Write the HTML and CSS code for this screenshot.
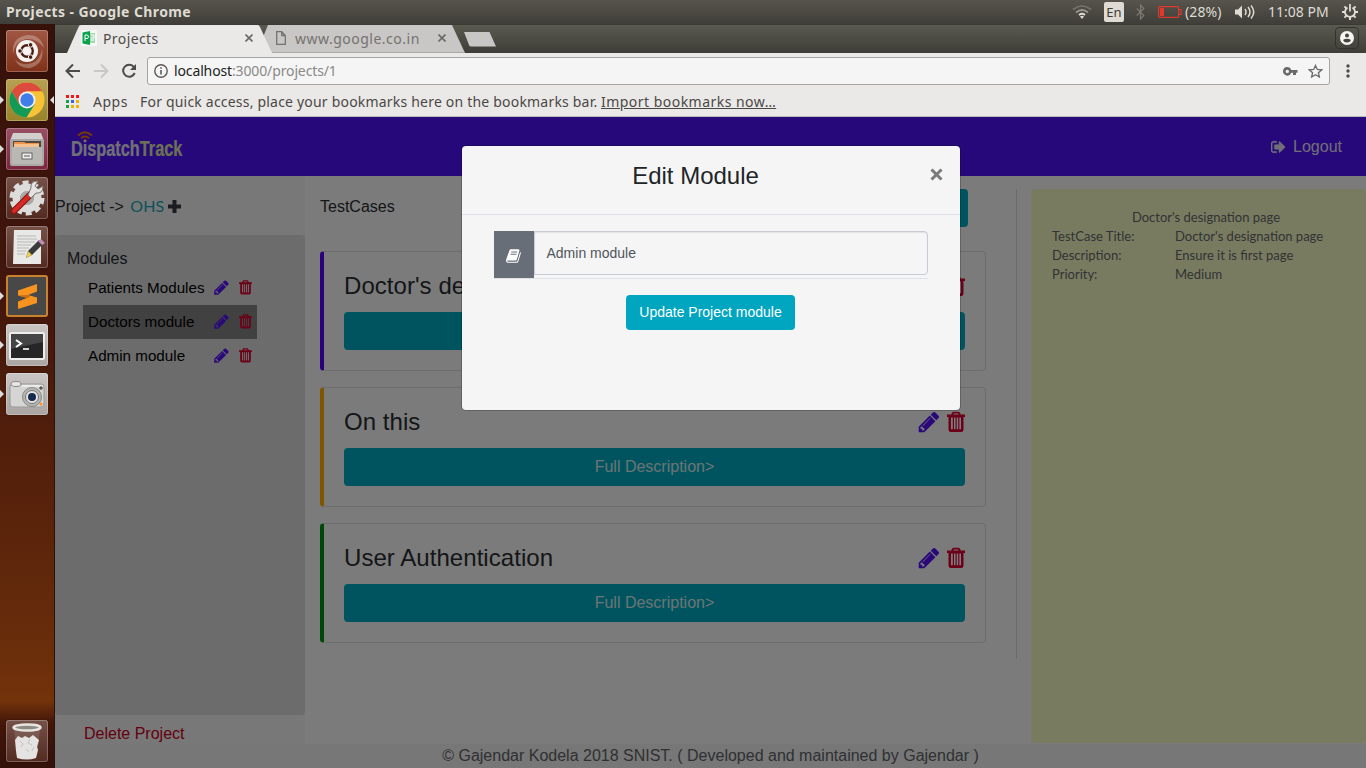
FILE: index.html
```html
<!DOCTYPE html>
<html lang="en">
<head>
<meta charset="utf-8">
<title>Projects</title>
<link rel="stylesheet" href="styles.css">
</head>
<body>
<svg class="defs" aria-hidden="true">
  <symbol id="pencil" viewBox="0 0 1792 1792"><path d="M491 1536l91-91-235-235-91 91v107h128v128h107zm523-928q0-22-22-22-10 0-17 7l-542 542q-7 7-7 17 0 22 22 22 10 0 17-7l542-542q7-7 7-17zm-54-192l416 416-832 832h-416v-416zm683 96q0 53-37 90l-166 166-416-416 166-165q36-38 90-38 53 0 91 38l235 234q37 39 37 91z"/></symbol>
  <symbol id="trash" viewBox="0 0 24 24"><path fill-rule="evenodd" d="M9.500 1.800h5q1 0 1.400.9l.9 1.800H21V7h-1.500v12.500q0 2.500-2.300 2.500H6.800q-2.300 0-2.300-2.500V7H3V4.500h4.200l.9-1.800q.4-.9 1.400-.9zM9.300 4.500h5.400l-.6-1H9.900zM7 7.500v11.700h1.800V7.500zM10 7.500v11.700h1.500V7.500zM12.700 7.500v11.700h1.500V7.500zM15.400 7.500v11.700H17V7.500z"/></symbol>
</svg>
<div class="screen">
  <header class="topbar">
    <span class="window-title">Projects - Google Chrome</span>
    <div class="indicators">
      <svg class="i-wifi" width="20" height="16" viewBox="0 0 20 16" fill="none" stroke-width="1.700"><path d="M1 5.500Q10-1.500 19 5.500" stroke="#77756e"/><path d="M4 8.500Q10 3.500 16 8.500" stroke="#99978f"/><path d="M7 11Q10 8.500 13 11" stroke="#dfdbd2"/><path d="M8 12.500l2 2.500 2-2.500q-2-1.500-4 0z" fill="#dfdbd2" stroke="none"/></svg>
      <span class="lang">En</span>
      <svg class="i-bt" width="9" height="16" viewBox="0 0 9 16" fill="none" stroke="#7c7a73" stroke-width="1.200"><path d="M.8 4.500l7 7L4.500 15V1l3.300 3.500-7 7"/></svg>
      <svg class="i-bat" width="24" height="12" viewBox="0 0 24 12" fill="none" stroke="#df382c" stroke-width="1.200"><rect x=".6" y=".6" width="20" height="10.800" rx="1"/><path d="M21 3.500h2v5h-2"/><path d="M2 2h4v8H2z" fill="#df382c" stroke="none"/></svg>
      <span class="pct">(28%)</span>
      <svg class="i-vol" width="21" height="16" viewBox="0 0 21 16" fill="none" stroke="#dfdbd2" stroke-width="1.500"><path d="M0 5.500h3L7 1.500v13l-4-4H0z" fill="#dfdbd2" stroke="none"/><path d="M10 5q2 3 0 6M13 3q4 5 0 10M16 1.500q5.500 6.500 0 13"/></svg>
      <span class="clock">11:08 PM</span>
      <svg class="i-gear" width="16" height="16" viewBox="0 0 16 16" fill="none" stroke="#dfdbd2"><path d="M5.500 3.600a5 5 0 1 0 5 0" stroke-width="1.800"/><path d="M8 0v7.500" stroke-width="1.800"/><path d="M2.400 2.400l2 2M13.600 2.400l-2 2M0 8h3M13 8h3M2.400 13.600l2-2M13.600 13.600l-2-2M8 13v3" stroke-width="2"/></svg>
    </div>
  </header>
  <div class="desktop">
    <nav class="launcher">
      <div class="tile t-ubuntu"><svg viewBox="0 0 42 42"><path d="M7 24Q5 7 22 5Q35 5 38 18Q31 8 20 9Q9 11 7 24M36 17Q39 34 24 38Q14 39 9 30Q20 38 30 31Q36 25 36 17" fill="#fff" opacity=".28"/><circle cx="21" cy="21" r="11" fill="#f6f3f1"/><circle cx="21" cy="21" r="5.800" fill="none" stroke="#4a1e14" stroke-width="2.400"/><g fill="#4a1e14" stroke="#f6f3f1" stroke-width="1"><circle cx="14" cy="21" r="2.300"/><circle cx="24.600" cy="14.900" r="2.300"/><circle cx="24.600" cy="27.100" r="2.300"/></g></svg></div>
      <div class="tile t-chrome run"><svg viewBox="0 0 42 42"><circle cx="21" cy="21" r="17.500" fill="#f7c235"/><path d="M5.800 12.300A17.500 17.500 0 0 1 36.200 12.300H21L13.400 25.400z" fill="#dc4b3e"/><path d="M5.800 12.300A17.500 17.500 0 0 0 20.500 38.500L28.600 25.400H13.400z" fill="#139a57"/><circle cx="21" cy="21" r="8.500" fill="#f1f1ef"/><circle cx="21" cy="21" r="6.700" fill="#3f7ee8"/></svg></div>
      <div class="tile t-files run"><svg viewBox="0 0 42 42"><path d="M7 5h28l3 8H4z" fill="#d1d0cd"/><rect x="4" y="11" width="34" height="27" rx="2" fill="#aaa9a6"/><rect x="7" y="13" width="28" height="6" fill="#4c4843"/><path d="M8 14h10l2 1h13v4H8z" fill="#ed9446"/><path d="M8 16h25v3H8z" fill="#f5c28f"/><rect x="6" y="19" width="30" height="17" fill="#b9b8b5"/><rect x="16" y="25" width="10" height="6" fill="#eee" stroke="#65635f"/><path d="M18 28h6" stroke="#555"/></svg></div>
      <div class="tile t-dark"><svg viewBox="0 0 42 42"><circle cx="21" cy="21" r="10.500" fill="none" stroke="#dcdcda" stroke-width="8"/><circle cx="21" cy="21" r="15.500" fill="none" stroke="#dcdcda" stroke-width="4" stroke-dasharray="6 3.740"/><circle cx="21" cy="21" r="7" fill="#a9a8a6"/><path d="M8 34L28 14" stroke="#801311" stroke-width="6.500" stroke-linecap="round"/><path d="M8 34L24 18" stroke="#d72924" stroke-width="4.500" stroke-linecap="round"/><path d="M22 18l3 3 5-5q7 1 7-7l-5 3-3-3 3-5q-8 0-7 7z" fill="#e5e4e2" stroke="#777"/></svg></div>
      <div class="tile t-dark"><svg viewBox="0 0 42 42"><path d="M8 4h27v34H7z" fill="#e8e8e6"/><path d="M11 10h19M11 13h20M11 16h18M11 19h14M11 22h12M11 25h9M11 28h8" stroke="#b7b7b5"/><path d="M20 32l2-7L33 14l4 4-11 11z" fill="#3b3b39"/><path d="M20 32l2-7 4 4z" fill="#e7cc4d"/><path d="M32 15l3-2 4 4-3 2z" fill="#c48db5"/></svg></div>
      <div class="tile t-sublime run"><svg viewBox="0 0 42 42"><path d="M12 15.500L31 9v7.500l-9 3.500 9 2.500V28L12 34v-7.500l9-3.500-9-2.500z" fill="#f7931e"/><path d="M12 20.500l9 2.500 3-1-2-2z" fill="#c96d0c"/></svg></div>
      <div class="tile t-grey run"><svg viewBox="0 0 42 42"><rect x="3" y="8" width="36" height="28" rx="2" fill="#eee"/><rect x="5" y="10" width="32" height="24" fill="#262626"/><path d="M5 10h32v8L5 25z" fill="#454545"/><path d="M10 16l5 3.500-5 3.500" fill="none" stroke="#fff" stroke-width="2"/><path d="M17 25h6" stroke="#fff" stroke-width="1.600"/></svg></div>
      <div class="tile t-grey run"><svg viewBox="0 0 42 42"><rect x="4" y="11" width="34" height="23" rx="3" fill="#d5d5d3" stroke="#999"/><ellipse cx="10" cy="11" rx="5" ry="2.500" fill="#e7e7e5" stroke="#888"/><path d="M16 13h21" stroke="#fff"/><circle cx="26" cy="24" r="9.500" fill="#b5b5b3" stroke="#888"/><circle cx="26" cy="24" r="6.500" fill="#e4e4e2" stroke="#777"/><circle cx="26" cy="24" r="4" fill="#15284d"/><circle cx="35" cy="31" r="1.500" fill="#f7931e"/><path d="M35 13v4M33 15h4" stroke="#333"/></svg></div>
      <div class="tile t-dark trash"><svg viewBox="0 0 42 42"><path d="M8 9l3 27q10 4 20 0l3-27z" fill="#968580" opacity=".35"/><ellipse cx="21" cy="7.500" rx="13.500" ry="3" fill="#8e8983" stroke="#e8e5e1" stroke-width="2.400"/><path d="M9 20l3-4 4 2 3-2 4 2 4-3 6 5-2 7 1 3-2 8q-9 3-19 0l-1-7z" fill="#e4e3e1"/><path d="M14 21l3 3-2 3M24 19l-2 4 4 2M20 29l3 3M28 27l-2 4" stroke="#c3c1bd" fill="none"/></svg></div>
    </nav>
    <div class="browser">
      <div class="tabs">
        <svg class="tabshapes" width="450" height="29" viewBox="0 0 450 29"><path d="M209 29L206 18 213 1H397L410 29z" fill="#c9c7c5"/><path d="M217 28.500H410" stroke="#aaa8a5"/><path d="M12 29L24 2Q24.500 1 26 1H203Q204 1 205 3L217 29z" fill="#ebe9e7"/><path d="M409 8H434.500L441 22.500H416Q414.500 22.500 414 21z" fill="#c9c7c5"/></svg>
        <div class="tab tab-active">
          <svg width="16" height="16" viewBox="0 0 16 16"><path d="M0 0h16v16H0z" fill="#f5f8f5"/><path d="M8 3h6v10H8z" fill="#a5d9b6"/><path d="M1.500 2.500L9 1v14l-7.500-1.500z" fill="#0ba24d"/><path d="M4 11V5h2q1.500.2 1.500 1.700T6 8.500H4M10 5h3v3h-3M10 10h3" stroke="#fff" fill="none"/></svg>
          <span class="tab-name">Projects</span>
          <svg class="x" width="8" height="8" viewBox="0 0 8 8"><path d="M.5.5l7 7M7.500.5l-7 7"/></svg>
        </div>
        <div class="tab tab-idle">
          <svg width="10" height="14" viewBox="0 0 10 14" fill="none" stroke="#747270" stroke-width="1.300"><path d="M.7.7h5l3.600 3.800v8.800H.7zM5.700.7v3.800h3.600"/></svg>
          <span class="tab-name">www.google.co.in</span>
          <svg class="x" width="8" height="8" viewBox="0 0 8 8"><path d="M.5.5l7 7M7.500.5l-7 7"/></svg>
        </div>
        <div class="profile"><svg width="14" height="14" viewBox="0 0 14 14"><circle cx="7" cy="7" r="7" fill="#f4f4f2"/><circle cx="7" cy="4.500" r="2" fill="#45453f"/><path d="M3 9q4-2.500 8 0-1 2.500-4 2.500T3 9z" fill="#45453f"/></svg></div>
      </div>
      <div class="toolbar">
        <svg width="16" height="16" viewBox="0 0 16 16" class="nav"><path d="M15 8H2M8 1.500L1.500 8 8 14.500"/></svg>
        <svg width="16" height="16" viewBox="0 0 16 16" class="nav off"><path d="M1 8h13M8 1.500L14.500 8 8 14.500"/></svg>
        <svg width="16" height="16" viewBox="0 0 16 16" class="nav"><path d="M13 4.200A6 6 0 1 0 13.700 10"/><path d="M15 1v6H9z" fill="#4c4b49" stroke="none"/></svg>
        <div class="address">
          <svg width="14" height="14" viewBox="0 0 14 14" fill="none" stroke="#5c5b59" stroke-width="1.400"><circle cx="7" cy="7" r="6.200"/><path d="M7 6v4.500M7 3.300v1.500" stroke-width="1.600"/></svg>
          <span class="url">localhost<i>:3000/projects/1</i></span>
          <svg class="key" width="15" height="9" viewBox="0 0 15 9"><path d="M4.300 0a4.300 4.300 0 1 0 4 5.800H10V8h3V5.800h1.500V3H8.300A4.300 4.300 0 0 0 4.300 0zm0 2.700a1.700 1.700 0 1 1 0 3.400 1.700 1.700 0 0 1 0-3.400z" fill="#6b6a68" fill-rule="evenodd"/></svg>
          <svg class="star" width="15" height="14" viewBox="0 0 15 14"><path d="M7.500 1.400l1.800 4 4.500.4-3.400 2.900 1 4.300-3.900-2.300L3.600 13l1-4.300L1.200 5.800l4.500-.4z" fill="none" stroke="#6b6a68" stroke-width="1.300"/></svg>
        </div>
        <svg width="4" height="14" viewBox="0 0 4 14" fill="#4c4b49"><circle cx="2" cy="2" r="1.700"/><circle cx="2" cy="7" r="1.700"/><circle cx="2" cy="12" r="1.700"/></svg>
      </div>
      <div class="bookmarks">
        <svg width="13" height="13" viewBox="0 0 13 13"><path d="M0 0h3v3H0zM5 0h3v3H5zM10 0h3v3h-3z" fill="#f01818"/><path d="M0 5h3v3H0zM0 10h3v3H0z" fill="#16a344"/><path d="M5 5h3v3H5z" fill="#4060e8"/><path d="M10 5h3v3h-3zM10 10h3v3h-3zM5 10h3v3H5z" fill="#edb20a"/></svg>
        <span class="apps">Apps</span><span class="hint">For quick access, place your bookmarks here on the bookmarks bar.</span><span class="import">Import bookmarks now…</span>
      </div>
      <main class="page">
        <div class="site-head">
          <div class="logo"><svg width="16" height="11" viewBox="0 0 16 11" fill="none" stroke="#f07800" stroke-width="1.800"><path d="M1 4.500Q8-2 15 4.500M4 7.300q4-3.500 8 0"/><circle cx="8" cy="9.500" r="1.500" fill="#f07800" stroke="none"/></svg><span>Dispatch<b>Track</b></span></div>
          <div class="logout"><svg width="16" height="16" viewBox="0 0 1792 1792" fill="currentColor"><path stroke="currentColor" stroke-width="60" d="M640 1440q0 4 1 20t.5 26.500-3 23.500-10 19.500-20.500 6.500h-320q-119 0-203.500-84.500t-84.500-203.500v-704q0-119 84.500-203.500t203.500-84.500h320q13 0 22.500 9.500t9.500 22.500q0 4 1 20t.5 26.500-3 23.500-10 19.500-20.500 6.500h-320q-66 0-113 47t-47 113v704q0 66 47 113t113 47h312l11.500 1 11.500 3 8 5.500 7 9 2 13.500zm928-544q0 26-19 45l-544 544q-19 19-45 19t-45-19-19-45v-288h-448q-26 0-45-19t-19-45v-384q0-26 19-45t45-19h448v-288q0-26 19-45t45-19 45 19l544 544q19 19 19 45z"/></svg><span>Logout</span></div>
        </div>
        <div class="columns">
          <aside class="left">
            <div class="crumb">Project -&gt; <span class="ohs">OHS</span><svg width="13" height="13" viewBox="0 0 13 13"><path d="M4.500 0h4v4.500H13v4H8.500V13h-4V8.500H0v-4h4.500z" fill="#343a42"/></svg></div>
            <div class="modules">
              <div class="modules-title">Modules</div>
              <div class="module"><span>Patients Modules</span><svg class="ico edit"><use href="#pencil"/></svg><svg class="ico del"><use href="#trash"/></svg></div>
              <div class="module current"><span>Doctors module</span><svg class="ico edit"><use href="#pencil"/></svg><svg class="ico del"><use href="#trash"/></svg></div>
              <div class="module"><span>Admin module</span><svg class="ico edit"><use href="#pencil"/></svg><svg class="ico del"><use href="#trash"/></svg></div>
            </div>
            <div class="delete">Delete Project</div>
          </aside>
          <section class="cases">
            <div class="cases-head"><span>TestCases</span><div class="add"></div></div>
            <article class="card c-purple"><div class="card-head"><h4>Doctor's designation page</h4><svg class="ico edit"><use href="#pencil"/></svg><svg class="ico del"><use href="#trash"/></svg></div><div class="btn">Full Description&gt;</div></article>
            <article class="card c-orange"><div class="card-head"><h4>On this</h4><svg class="ico edit"><use href="#pencil"/></svg><svg class="ico del"><use href="#trash"/></svg></div><div class="btn">Full Description&gt;</div></article>
            <article class="card c-green"><div class="card-head"><h4>User Authentication</h4><svg class="ico edit"><use href="#pencil"/></svg><svg class="ico del"><use href="#trash"/></svg></div><div class="btn">Full Description&gt;</div></article>
          </section>
          <div class="divider"></div>
          <section class="detail">
            <div class="detail-title">Doctor's designation page</div>
            <dl><dt>TestCase Title:</dt><dd>Doctor's designation page</dd><dt>Description:</dt><dd>Ensure it is first page</dd><dt>Priority:</dt><dd>Medium</dd></dl>
          </section>
        </div>
        <footer class="foot">© Gajendar Kodela 2018 SNIST. ( Developed and maintained by Gajendar )</footer>
        <div class="overlay">
          <div class="modal">
            <div class="modal-head"><h4>Edit Module</h4><svg class="close" width="13" height="13" viewBox="0 0 13 13"><path d="M1.500 1.500l10 10M11.500 1.500l-10 10"/></svg></div>
            <div class="modal-body">
              <div class="field"><div class="addon"><svg width="16" height="16" viewBox="0 0 1792 1792" fill="#fff"><path d="M1639 478q40 57 18 129l-275 906q-19 64-76.500 107.500t-122.500 43.500h-923q-77 0-148.500-53.500t-99.500-131.500q-24-67-2-127 0-4 3-27t4-37q1-8-3-21.500t-3-19.500q2-11 8-21t16.500-23.500 16.500-23.500q23-38 45-91.500t30-91.500q3-10 .5-30t-.5-28q3-11 17-28t17-23q21-36 42-92t25-90q1-9-2.500-32t.5-28q4-13 22-30.500t22-22.500q19-26 42.500-84.500t27.500-96.500q1-8-3-25.500t-2-26.500q2-8 9-18t18-23 17-21q8-12 16.500-30.500t15-35 16-36 19.500-32 26.500-23.500 36-11.500 47.500 5.500l-1 3q38-9 51-9h761q74 0 114 56t18 130l-274 906q-36 119-71.500 153.500t-128.500 34.500h-869q-27 0-38 15-11 16-1 43 24 70 144 70h923q29 0 56-15.500t35-41.500l300-987q7-22 5-57 38 15 59 43zm-1064 2q-4 13 2 22.500t20 9.500h608q13 0 25.500-9.500t16.500-22.500l21-64q4-13-2-22.500t-20-9.500h-608q-13 0-25.500 9.500t-16.500 22.500zm-83 256q-4 13 2 22.500t20 9.500h608q13 0 25.500-9.500t16.500-22.500l21-64q4-13-2-22.500t-20-9.500h-608q-13 0-25.500 9.500t-16.500 22.500z"/></svg></div><div class="input">Admin module</div></div>
              <div class="update">Update Project module</div>
            </div>
          </div>
        </div>
      </main>
    </div>
  </div>
</div>
</body>
</html>
```
FILE: styles.css
```css
* { box-sizing: border-box; }
body { margin: 0; font-family: "Liberation Sans", Arial, sans-serif; }
svg { display: block; flex: none; }
.defs { position: absolute; width: 0; height: 0; }
.screen { width: 1366px; height: 768px; overflow: hidden; display: flex; flex-direction: column; }

.topbar { height: 24px; background: linear-gradient(#56544c, #3f3e39); color: #dfdbd2; display: flex; justify-content: space-between; align-items: center; padding: 0 8px 0 6px; font: 14px/24px "Noto Sans", sans-serif; white-space: nowrap; }
.window-title { font-weight: 700; letter-spacing: .4px; }
.indicators { display: flex; align-items: center; }
.lang { width: 20px; height: 20px; margin-left: 12px; background: #dfdbd2; color: #3c3b37; border-radius: 2px; text-align: center; font-size: 13px; line-height: 20px; }
.i-bt { margin-left: 12px; }
.i-bat { margin-left: 13px; }
.pct { margin-left: 3px; width: 39px; letter-spacing: .1px; }
.i-vol { margin-left: 11px; }
.clock { margin-left: 12px; width: 62px; letter-spacing: 0; }
.i-gear { margin-left: 12px; }

.desktop { height: 744px; display: flex; }
.launcher { width: 55px; padding: 6px 0 6px 6px; display: flex; flex-direction: column; gap: 7px; background: linear-gradient(#36110a 0, #42160c 35%, #54200b 60%, #652b0b 80%, #73330b 91%, #431609 94%, #34110b 100%); border-right: 1px solid #29120c; }
.tile { width: 42px; height: 42px; box-shadow: inset 0 0 0 1px rgba(255,255,255,.25), 0 0 2px rgba(0,0,0,.4); border-radius: 3px; position: relative; }
.tile svg { width: 42px; height: 42px; }
.run::before { content: ""; position: absolute; left: -6px; top: 17px; border: 4px solid transparent; border-left-color: #ddd; border-right: 0; }
.t-chrome::after { content: ""; position: absolute; right: -6px; top: 17px; border: 4px solid transparent; border-right-color: #ddd; border-left: 0; }
.t-ubuntu { background: linear-gradient(#a05743, #7f3219); }
.t-chrome { background: linear-gradient(#b7a152, #98832b); }
.t-files { background: linear-gradient(#995064, #7b263d); }
.t-dark { background: linear-gradient(#765148, #522a20); }
.t-sublime { background: #484848; box-shadow: inset 0 0 0 2px #c9812e; }
.t-grey { background: linear-gradient(#c9c6c4, #aaa5a2); }
.trash { margin-top: auto; }

.browser { width: 1311px; display: flex; flex-direction: column; font-family: "Noto Sans", sans-serif; }
.tabs { height: 29px; position: relative; display: flex; align-items: center; background: linear-gradient(#5a594f, #3e3e38); border-top: 1px solid #3b3a35; font-size: 14px; color: #4f4d4a; }
.tabshapes { position: absolute; left: 0; top: -1px; }
.tab { position: relative; display: flex; align-items: center; height: 26px; padding-bottom: 1px; margin-bottom: 1px; }
.tab-active { width: 172px; margin-left: 26px; margin-right: 1px; }
.tab-active .tab-name { margin-left: 6px; letter-spacing: .4px; }
.x { margin-left: auto; stroke: #6a6966; stroke-width: 1.600; }
.tab-idle { width: 170px; margin-left: 22px; color: #747270; }
.tab-idle .tab-name { margin-left: 9px; letter-spacing: .5px; }
.profile { margin-left: auto; margin-right: 7px; margin-bottom: 2px; width: 24px; height: 22px; border: 1px solid #33332e; border-radius: 4px; display: flex; align-items: center; justify-content: center; }
.toolbar { height: 35px; background: #ebe9e7; display: flex; align-items: center; padding: 1px 15px 0 10px; gap: 12px; }
.nav { fill: none; stroke: #4c4b49; stroke-width: 2; }
.off { stroke: #c9c7c5; }
.address { margin-left: -2px; width: 1183px; height: 28px; border: 1px solid #a5a4a2; border-radius: 3px; background: #f5f5f5; display: flex; align-items: center; padding: 0 6px; }
.url { margin: 0 0 2px 6px; font-size: 14px; letter-spacing: -.13px; color: #222; }
.url i { font-style: normal; color: #8b8987; }
.key { margin-left: auto; }
.star { margin-left: 10px; }
.toolbar > svg:last-child { margin-left: 4px; }
.bookmarks { height: 29px; background: #ebe9e7; border-bottom: 1px solid #bdbbb9; display: flex; align-items: center; padding: 0 0 1px 11px; font-size: 14px; color: #4a4846; white-space: nowrap; }
.bookmarks span { margin-bottom: 1px; }
.bookmarks .apps { margin-left: 14px; width: 47px; letter-spacing: .5px; }
.hint { width: 461px; letter-spacing: .2px; }
.import { text-decoration: underline; letter-spacing: .47px; }

.page { height: 651px; position: relative; display: flex; flex-direction: column; background: #f7f7f7; color: #292c30; font: 16px/24px "Liberation Sans", Arial, sans-serif; }
.site-head { height: 59px; flex: none; background: #4c10f4; color: #e3e1ef; display: flex; justify-content: space-between; align-items: center; padding: 0 24px 0 16px; }
.logo { height: 31px; font: 700 22px/24px "Liberation Sans", sans-serif; }
.logo svg { margin: 0 0 -5px 6px; }
.logo span { display: block; width: 160px; transform: scaleX(.74); transform-origin: left; -webkit-text-stroke: .2px; }
.logo b { color: #dce1aa; }
.logout { display: flex; gap: 6px; align-items: center; color: #e1dff0; }
.columns { flex: 1; display: flex; min-height: 0; }
.left { width: 250px; background: #f1f1f1; }
.crumb { height: 59px; padding-top: 2px; display: flex; align-items: center; white-space: pre; }
.crumb svg { margin-bottom: 1px; }
.ohs { font-family: Lato, sans-serif; color: #18a5b5; margin: 0 4px 2px 2px; }
.modules { height: 480px; background: #d8d8d8; border-radius: 4px; padding: 12px 12px 0; }
.modules-title { height: 24px; }
.module { width: 174px; height: 34px; margin-left: 16px; padding-left: 5px; display: flex; align-items: center; font-size: 15.200px; color: #000; }
.module span { width: 125px; flex: none; white-space: nowrap; }
.current { background: #828282; }
.ico { width: 16px; height: 16px; }
.edit { fill: #5212f5; }
.del { fill: #d80030; }
.module .ico { width: 17px; height: 17px; margin-bottom: 1px; }
.module .del { margin-left: 7px; }
.delete { color: #c6001f; height: 29px; padding: 7px 29px 0; }
.cases { width: 696px; padding: 13px 15px 0; display: flex; flex-direction: column; }
.cases-head { height: 46px; display: flex; justify-content: space-between; padding: 6px 18px 0 0; margin-bottom: 16px; }
.add { width: 120px; height: 38px; margin-top: -6px; background: #00a8be; border-radius: 4px; }
.card { height: 120px; margin-bottom: 16px; border: 1px solid #dadada; border-left: 4px solid; border-radius: 4px; padding: 20px; flex: none; }
.c-purple { border-left-color: #5600fa; }
.c-orange { border-left-color: #ffaa00; }
.c-green { border-left-color: #009010; }
.card-head { height: 28px; display: flex; align-items: center; margin-bottom: 12px; }
.card h4 { margin: 0 auto 0 0; font-size: 24px; font-weight: 400; letter-spacing: .05px; }
.card .ico { width: 24px; height: 24px; }
.card .del { margin: 0 -3px 0 3px; }
.btn { height: 38px; line-height: 38px; border-radius: 4px; background: #00a8be; color: #d7e9ec; text-align: center; }
.divider { width: 1px; height: 470px; margin: 13px 0 0 15px; background: #d6d6d6; }
.detail { width: 335px; height: 554px; margin: 13px 0 0 14px; padding: 19px 21px 0; background: #f1f7c1; border-radius: 4px; font: 13px/19px Lato, sans-serif; color: #65676a; }
.detail-title { text-align: center; padding-left: 15px; }
.detail dl { margin: 0; display: grid; grid-template-columns: 123px 1fr; }
.detail dd { margin: 0; }
.foot { height: 24px; flex: none; background: #eee; text-align: center; color: #5f6266; }
.overlay { position: absolute; inset: 0; background: rgba(0,0,0,.5); display: flex; justify-content: center; align-items: flex-start; padding-top: 29px; }
.modal { width: 498px; height: 264px; background: #f5f5f5; border-radius: 4px; box-shadow: 0 0 0 1px rgba(0,0,0,.2); }
.modal-head { height: 69px; border-bottom: 1px solid #dfe1e8; display: flex; align-items: center; padding: 0 30px 9px 0; position: relative; }
.modal-head h4 { margin: 0; flex: 1; text-align: center; font-size: 24px; font-weight: 400; color: #212529; }
.close { position: absolute; right: 17px; top: 22px; stroke: #7a7a7a; stroke-width: 3; }
.modal-body { padding: 16px 32px; display: flex; flex-direction: column; align-items: center; }
.field { width: 434px; height: 48px; display: flex; border-bottom: 1px solid #dfe1e8; }
.addon { width: 40px; height: 47px; padding-top: 3px; background: #686e78; display: flex; align-items: center; justify-content: center; }
.input { flex: 1; height: 44px; border: 1px solid #c8cad4; border-radius: 0 4px 4px 0; padding-left: 12px; font-size: 14px; line-height: 43px; color: #50555c; box-shadow: inset 0 1px 1px rgba(0,0,0,.08); }
.update { width: 169px; height: 35px; margin-top: 16px; border-radius: 4px; background: #00a5bf; color: #fff; font-size: 14px; line-height: 35px; text-align: center; }
```
